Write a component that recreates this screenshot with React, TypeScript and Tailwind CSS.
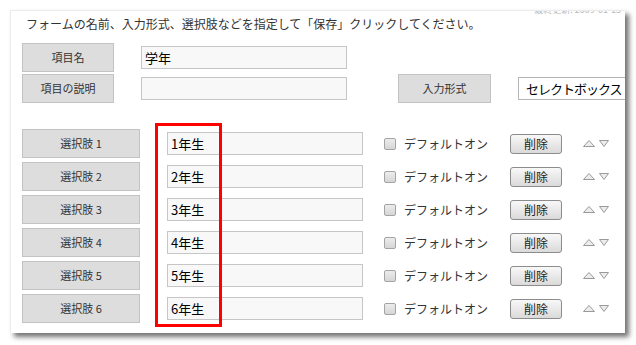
import React from 'react';

const font = { fontFamily: '"Noto Sans CJK JP", "Noto Sans", sans-serif' };

const choices = ['1年生', '2年生', '3年生', '4年生', '5年生', '6年生'];

const Label = ({ children, w }: { children: React.ReactNode; w: string }) => (
  <div
    className={`${w} h-[29px] shrink-0 flex items-center justify-center bg-[#dddddd] border border-[#c3c3c3] text-[11px] leading-none text-[#333]`}
  >
    {children}
  </div>
);

const Arrows = () => (
  <div className="flex items-center gap-[4px] ml-[21px] shrink-0">
    <svg width="12" height="7" viewBox="0 0 12 7">
      <polygon points="6,0.5 11.5,6.5 0.5,6.5" fill="#ececec" stroke="#9a9a9a" strokeWidth="1" />
    </svg>
    <svg width="10" height="7" viewBox="0 0 10 7">
      <polygon points="0.5,0.5 9.5,0.5 5,6.5" fill="#ececec" stroke="#9a9a9a" strokeWidth="1" />
    </svg>
  </div>
);

export default function App() {
  return (
    <div className="w-[636px] h-[345px] bg-white overflow-hidden pt-[10px] pl-[10px]" style={font}>
      <div className="relative w-[615px] h-[323px] bg-white overflow-hidden border-l border-t border-[#ececec] shadow-[4px_4px_5px_rgba(0,0,0,0.55)]">
        <div className="absolute top-[-6px] right-[4px] text-[9px] leading-[9px] text-[#b8b8b8] whitespace-nowrap">
          最終更新: 2009-01-15
        </div>

        <div className="pl-[15px] pt-[5px] h-[32px] text-[12px] leading-[16px] text-[#333] whitespace-nowrap">
          フォームの名前、入力形式、選択肢などを指定して「保存」クリックしてください。
        </div>

        <div className="pl-[11px] flex flex-col gap-[2px]">
          <div className="flex items-center">
            <Label w="w-[92px]">項目名</Label>
            <div className="ml-[27px] w-[206px] h-[23px] shrink-0 bg-[#f8f8f8] border border-[#c6c6c6] flex items-center px-[3px] text-[13px] leading-none text-black">
              学年
            </div>
          </div>
          <div className="flex items-center">
            <Label w="w-[92px]">項目の説明</Label>
            <div className="ml-[27px] w-[206px] h-[23px] shrink-0 bg-[#f8f8f8] border border-[#c6c6c6]" />
            <div className="ml-[51px] shrink-0">
              <Label w="w-[93px]">入力形式</Label>
            </div>
            <div className="ml-[27px] w-[120px] h-[23px] shrink-0 bg-white border border-[#b5b5b5] flex items-center pl-[7px] text-[13px] tracking-[-1px] leading-none text-black whitespace-nowrap">
              セレクトボックス
            </div>
          </div>
        </div>

        <div className="pl-[11px] pt-[26px] flex flex-col gap-[4px]">
          {choices.map((c, i) => (
            <div key={c} className="flex items-center">
              <Label w="w-[118px]">選択肢 {i + 1}</Label>
              <div className="ml-[27px] w-[196px] h-[23px] shrink-0 bg-[#f8f8f8] border border-[#c6c6c6] flex items-center px-[3px] text-[13px] leading-none text-black">
                {c}
              </div>
              <div className="ml-[21px] w-[12px] h-[12px] shrink-0 rounded-[2px] border border-[#a4a4a4] bg-gradient-to-b from-[#ececec] to-[#d6d6d6]" />
              <div className="ml-[8px] w-[106px] shrink-0 text-[12px] leading-none text-[#333] whitespace-nowrap">
                デフォルトオン
              </div>
              <div className="w-[52px] h-[20px] shrink-0 rounded-[3px] border border-[#8c8c8c] bg-gradient-to-b from-[#f8f8f8] to-[#dadada] flex items-center justify-center text-[12px] leading-none text-[#222]">
                削除
              </div>
              <Arrows />
            </div>
          ))}
        </div>

        <div className="absolute left-[144px] top-[112px] w-[67px] h-[204px] border-[3px] border-[#ff0000]" />
      </div>
    </div>
  );
}
